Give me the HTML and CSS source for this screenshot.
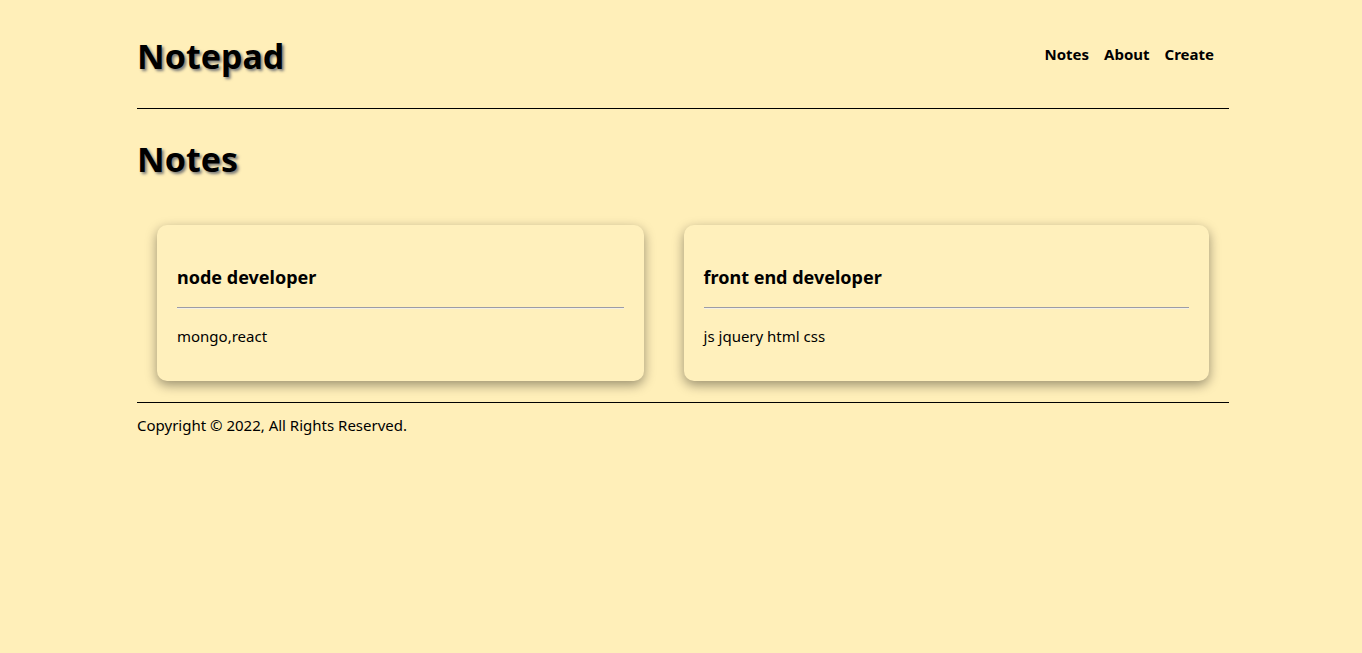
FILE: index.html
```html
<!DOCTYPE html>
<html>
<head>
<meta charset="utf-8">
<link rel="stylesheet" href="styles.css">
</head>
<body>
<div class="container">
  <header class="header">
    <h1 class="brand">Notepad</h1>
    <nav class="nav">
      <a href="#">Notes</a>
      <a href="#">About</a>
      <a href="#">Create</a>
    </nav>
  </header>
  <main class="main">
    <h1 class="page-title">Notes</h1>
    <div class="cards">
      <div class="card">
        <h3 class="card-title">node developer</h3>
        <hr class="card-rule">
        <p class="card-body">mongo,react</p>
      </div>
      <div class="card">
        <h3 class="card-title">front end developer</h3>
        <hr class="card-rule">
        <p class="card-body">js jquery html css</p>
      </div>
    </div>
  </main>
  <footer class="footer">Copyright © 2022, All Rights Reserved.</footer>
</div>
</body>
</html>
```
FILE: styles.css
```css
html, body {
  margin: 0;
  padding: 0;
  background: #ffefb9;
  color: #000;
  font-family: "Noto Sans", "Open Sans", sans-serif;
}
.container {
  width: 1092px;
  margin-left: 137px;
}
.header {
  height: 109px;
  box-sizing: border-box;
  display: flex;
  align-items: center;
  justify-content: space-between;
  border-bottom: 1px solid #000;
}
.brand {
  margin: 4px 0 0;
  font-size: 34px;
  font-weight: 700;
  text-shadow: 2px 2px 3px #777;
}
.nav {
  display: flex;
  gap: 15px;
  padding-right: 15px;
  margin-top: -1px;
}
.nav a {
  color: #000;
  text-decoration: none;
  font-weight: 700;
  font-size: 15px;
}
.main {
  padding-top: 27px;
}
.page-title {
  margin: 0;
  font-size: 34px;
  font-weight: 700;
  text-shadow: 2px 2px 3px #777;
}
.cards {
  display: flex;
  gap: 40px;
  padding: 43px 20px 21px;
}
.card {
  flex: 1 1 auto;
  padding: 20px;
  border-radius: 10px;
  background: #fff0bc;
  box-shadow: 0 4px 12px rgba(0, 0, 0, 0.4);
}
.card-title {
  margin: 20px 0 0;
  font-size: 18px;
  font-weight: 700;
}
.card-rule {
  margin: 18px 0 0;
  border: 0;
  border-top: 1px solid #9c9ca6;
  border-bottom: 1px solid #f4f0e4;
}
.card-body {
  margin: 17px 0 15px;
  font-size: 15px;
}
.footer {
  border-top: 1px solid #000;
  padding-top: 12px;
  font-size: 15px;
}
```
